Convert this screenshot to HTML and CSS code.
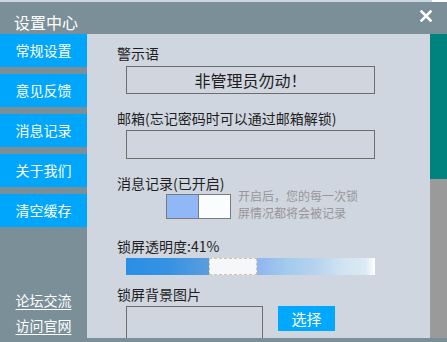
FILE: index.html
```html
<!DOCTYPE html>
<html lang="zh-CN">
<head>
<meta charset="utf-8">
<title>设置中心</title>
<link rel="stylesheet" href="styles.css">
</head>
<body>
<div class="window">
  <div class="topstrip"></div>
  <div class="titlebar">
    <span class="title">设置中心</span>
    <svg class="close" width="12" height="12" viewBox="0 0 12 12"><path d="M1.5 1.5 L10.5 10.5 M10.5 1.5 L1.5 10.5" stroke="#fff" stroke-width="2.6" stroke-linecap="square"/></svg>
  </div>
  <div class="main">
    <div class="sidebar">
      <div class="menu">
        <div class="menu-item">常规设置</div>
        <div class="menu-item">意见反馈</div>
        <div class="menu-item">消息记录</div>
        <div class="menu-item">关于我们</div>
        <div class="menu-item">清空缓存</div>
      </div>
      <div class="links">
        <a class="link">论坛交流</a>
        <a class="link">访问官网</a>
      </div>
    </div>
    <div class="content">
      <div class="label l1">警示语</div>
      <div class="box box1">非管理员勿动<span class="fw">！</span></div>
      <div class="label l2">邮箱(忘记密码时可以通过邮箱解锁)</div>
      <div class="box box2"></div>
      <div class="label l3">消息记录(已开启)</div>
      <div class="toggle-row">
        <div class="toggle"><span class="t-on"></span><span class="t-off"></span></div>
        <div class="hint">开启后<span class="fw">，</span>您的每一次锁<br>屏情况都将会被记录</div>
      </div>
      <div class="label l4">锁屏透明度:41%</div>
      <div class="slider">
        <div class="s-left"></div>
        <div class="s-handle"></div>
        <div class="s-right"></div>
      </div>
      <div class="label l5">锁屏背景图片</div>
      <div class="bg-row">
        <div class="img-box"></div>
        <div class="btns">
          <div class="btn">选择</div>
          <div class="btn"></div>
        </div>
      </div>
    </div>
    <div class="scrollbar"><div class="thumb"></div></div>
  </div>
</div>
</body>
</html>
```

FILE: styles.css
```css
html, body {
  margin: 0;
  padding: 0;
  width: 447px;
  height: 342px;
  overflow: hidden;
  background: #d0d6e0;
  font-family: "Noto Sans CJK SC", "Liberation Sans", sans-serif;
}
.window {
  width: 447px;
  height: 342px;
  display: flex;
  flex-direction: column;
  overflow: hidden;
}
.topstrip {
  height: 2px;
  background: linear-gradient(90deg, #d0d6e0 0, #d0d6e0 432px, #ffffff 432px);
  flex: none;
}
.titlebar {
  height: 32px;
  flex: none;
  background: #7a8f98;
  display: flex;
  align-items: flex-start;
  justify-content: space-between;
  padding: 0 15px 0 14px;
}
.title {
  color: #fff;
  font-size: 16px;
  line-height: 20px;
  margin-top: 10px;
}
.close {
  margin-top: 8px;
}
.main {
  flex: 1;
  display: flex;
  min-height: 0;
  border-bottom: 4px solid #7a8f98;
}
.sidebar {
  width: 87px;
  flex: none;
  background: #7a8f98;
  display: flex;
  flex-direction: column;
}
.menu {
  display: flex;
  flex-direction: column;
  gap: 7px;
}
.menu-item {
  height: 33px;
  background: #00a6fc;
  color: #fff;
  font-size: 14px;
  line-height: 33px;
  text-align: center;
}
.links {
  margin-top: auto;
  display: flex;
  flex-direction: column;
  align-items: center;
}
.link {
  color: #fff;
  font-size: 14px;
  line-height: 25px;
  text-decoration: underline;
  text-underline-offset: 3px;
}
.content {
  flex: 1;
  background: #d0d6e0;
  padding: 9px 0 0 30px;
  overflow: hidden;
  color: #1e1e1e;
}
.fw {
  display: inline-block;
  width: 1em;
  text-align: center;
}
.label {
  font-size: 14px;
  line-height: 20px;
  height: 20px;
  white-space: nowrap;
}
.box {
  box-sizing: border-box;
  width: 249px;
  margin-left: 9px;
  border: 1px solid #6e6e6e;
  text-align: center;
  font-size: 16px;
}
.box1 {
  height: 28px;
  line-height: 26px;
  margin-top: 3px;
}
.l2 { margin-top: 14px; }
.box2 {
  height: 29px;
  margin-top: 2px;
}
.l3 { margin-top: 14px; }
.toggle-row {
  display: flex;
  align-items: flex-start;
  margin-top: 1px;
  margin-left: 49px;
  height: 25px;
}
.toggle {
  box-sizing: border-box;
  width: 65px;
  height: 25px;
  border: 1px solid #7a7a7a;
  display: flex;
}
.t-on {
  width: 31px;
  background: #90b8f6;
  border-right: 1px solid #7a7a7a;
}
.t-off {
  flex: 1;
  background: #fbfcfe;
}
.hint {
  margin-left: 7px;
  margin-top: -7px;
  color: #969696;
  font-size: 12px;
  line-height: 17px;
  white-space: nowrap;
}
.l4 { margin-top: 17px; }
.slider {
  display: flex;
  width: 249px;
  height: 17px;
  margin-left: 9px;
  margin-top: 2px;
}
.s-left {
  width: 83px;
  background: linear-gradient(90deg, #2a8fe4 0%, #3592e2 50%, #5a9ddf 100%);
}
.s-handle {
  box-sizing: border-box;
  width: 48px;
  border: 1px dashed #d6c597;
  background: #f6f7f9;
}
.s-right {
  flex: 1;
  background: linear-gradient(90deg, #8db5f1 0%, #a2cbec 25%, #b6d3ef 50%, #d3e5f2 75%, #dbeaf3 92%, #ffffff 100%);
}
.l5 { margin-top: 9px; }
.bg-row {
  display: flex;
  margin-left: 9px;
  margin-top: 2px;
}
.img-box {
  box-sizing: border-box;
  width: 137px;
  height: 60px;
  border: 1px solid #6e6e6e;
}
.btns {
  margin-left: 15px;
  display: flex;
  flex-direction: column;
  gap: 7px;
}
.btn {
  width: 57px;
  height: 25px;
  background: #00a8ff;
  color: #fff;
  font-size: 15px;
  line-height: 25px;
  text-align: center;
}
.scrollbar {
  width: 17px;
  flex: none;
  background: #9a9a9a;
}
.thumb {
  height: 145px;
  background: #00827f;
}
```
